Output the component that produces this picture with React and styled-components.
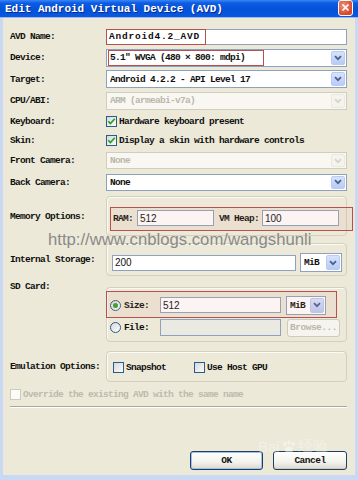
import React from "react";
import styled, { createGlobalStyle } from "styled-components";

const MONO = `"Liberation Mono", "DejaVu Sans Mono", monospace`;
const SANS = `"Liberation Sans", Arial, sans-serif`;

const Global = createGlobalStyle`
  html, body { margin: 0; padding: 0; background: #c8d8f4; }
  * { box-sizing: border-box; }
`;

const Window = styled.div`
  position: relative;
  width: 358px;
  height: 480px;
  overflow: hidden;
  display: flex;
  flex-direction: column;
  background: #c9d9f3;
  font-family: ${MONO};
  color: #111;
`;

const TitleBar = styled.div`
  height: 18px;
  flex: none;
  display: flex;
  align-items: center;
  padding: 0 5px;
  background: linear-gradient(#3a86f4 0%, #0b5ce4 18%, #0552d9 55%, #0858e0 100%);
  border-bottom: 1px solid #9cb8e8;
`;

const Title = styled.span`
  color: #fff;
  font-weight: bold;
  font-size: 11px;
  text-shadow: 1px 1px 0 #0a2a8a;
`;

const CloseBtn = styled.div`
  margin-left: auto;
  margin-top: -2px;
  width: 15px;
  height: 16px;
  border: 1px solid #fff;
  border-radius: 3px;
  background: radial-gradient(circle at 35% 35%, #f39478, #d9482a 70%);
  display: flex;
  align-items: center;
  justify-content: center;
`;

const Frame = styled.div`
  flex: 1;
  display: flex;
  padding: 0 4px 5px 3px;
`;

const Client = styled.div`
  flex: 1;
  display: flex;
  flex-direction: column;
  background: #ece9d8;
  padding: 8px 8px 5px 0;
`;

const Row = styled.div`
  flex: none;
  display: flex;
  align-items: ${(p) => (p.$top ? "flex-start" : "center")};
  height: ${(p) => p.$h}px;
  margin-top: ${(p) => p.$mt || 0}px;
`;

const Label = styled.div`
  width: ${(p) => (p.$auto ? "auto" : "103px")};
  flex: none;
  padding-left: 7px;
  font-size: 9.5px;
  font-weight: bold;
  letter-spacing: -0.7px;
  white-space: nowrap;
  color: ${(p) => (p.$disabled ? "#b9b7aa" : "#111")};
  ${(p) => (p.$pt ? `margin-top: ${p.$pt}px;` : "")}
`;

const Control = styled.div`
  width: 241px;
  flex: none;
  display: flex;
  align-items: center;
`;

const TextBox = styled.div`
  position: relative;
  height: ${(p) => p.$h || 16}px;
  width: ${(p) => (p.$w ? `${p.$w}px` : "100%")};
  flex: none;
  border: 1px solid #8ea2bd;
  background: ${(p) => (p.$disabled ? "#ebeae2" : "#fff")};
  display: flex;
  align-items: center;
  padding-left: 2px;
  font-family: ${(p) => (p.$sans ? SANS : MONO)};
  font-size: ${(p) => (p.$sans ? "10px" : "9.5px")};
  font-weight: ${(p) => (p.$sans ? "normal" : "bold")};
  letter-spacing: ${(p) => (p.$spread ? "0.8px" : p.$sans ? "0" : "-0.7px")};
  white-space: nowrap;
`;

const SelectBox = styled.div`
  position: relative;
  height: ${(p) => p.$h || 18}px;
  width: ${(p) => (p.$w ? `${p.$w}px` : "100%")};
  flex: none;
  border: 1px solid ${(p) => (p.$disabled ? "#cfcdc0" : "#8ea2bd")};
  background: ${(p) => (p.$disabled ? "#f8f7f2" : "#fff")};
  display: flex;
  align-items: center;
  padding-left: 3px;
  font-size: 9.5px;
  font-weight: bold;
  letter-spacing: -0.7px;
  white-space: nowrap;
  color: ${(p) => (p.$disabled ? "#bab8ac" : "#111")};
`;

const SelectText = styled.span`
  flex: 1;
  overflow: hidden;
`;

const DropBtn = styled.span`
  width: 14px;
  height: calc(100% - 2px);
  margin-right: 1px;
  border-radius: 2px;
  flex: none;
  border: 1px solid ${(p) => (p.$disabled ? "#ebe9df" : "#b9cbf3")};
  background: ${(p) =>
    p.$disabled ? "#f4f3ec" : "linear-gradient(#d7e3fd, #b8cbf7)"};
  display: flex;
  align-items: center;
  justify-content: center;
`;

const Mark = styled.span`
  position: absolute;
  left: ${(p) => p.$l}px;
  top: ${(p) => p.$t}px;
  width: ${(p) => p.$w}px;
  height: ${(p) => p.$h}px;
  border: 1.5px solid #b5514f;
  background: ${(p) => (p.$fill ? "rgba(225, 150, 130, 0.1)" : "transparent")};
  pointer-events: none;
`;

const Group = styled.div`
  position: relative;
  width: 241px;
  height: ${(p) => p.$h}px;
  flex: none;
  border: 1px solid #d3d0bf;
  border-radius: 4px;
  box-shadow: inset 1px 1px 0 #fbfaf5;
  display: flex;
  flex-direction: column;
  gap: ${(p) => p.$gap || 0}px;
  padding: ${(p) => p.$pad};
`;

const GroupLine = styled.div`
  display: flex;
  align-items: center;
  height: ${(p) => p.$h}px;
  flex: none;
`;

const SubLabel = styled.span`
  width: ${(p) => p.$w}px;
  margin-left: ${(p) => p.$ml || 0}px;
  flex: none;
  font-size: 9.5px;
  font-weight: bold;
  letter-spacing: -0.7px;
  white-space: nowrap;
`;

const CheckItem = styled.label`
  display: flex;
  align-items: center;
  gap: 2px;
  width: ${(p) => (p.$w ? `${p.$w}px` : "auto")};
  flex: none;
  font-size: 9.5px;
  font-weight: bold;
  letter-spacing: -0.7px;
  white-space: nowrap;
  color: ${(p) => (p.$disabled ? "#bcbaae" : "#111")};
`;

const Box = styled.span`
  width: 11px;
  height: 11px;
  flex: none;
  border: 1px solid ${(p) => (p.$disabled ? "#cdcbbf" : "#2d5b85")};
  background: ${(p) =>
    p.$disabled ? "#fbfbf8" : "linear-gradient(135deg, #d4d8e0, #fbfbf9)"};
  display: inline-flex;
  align-items: center;
  justify-content: center;
`;

const Radio = styled.span`
  width: 11px;
  height: 11px;
  flex: none;
  border-radius: 50%;
  border: 1px solid #2d5b85;
  background: linear-gradient(135deg, #d6d8dc, #fff);
  display: inline-flex;
  align-items: center;
  justify-content: center;
  margin-right: 3px;
  &::after {
    content: "";
    width: 5px;
    height: 5px;
    border-radius: 50%;
    background: ${(p) => (p.$on ? "#2aa52a" : "transparent")};
  }
`;

const Separator = styled.div`
  flex: none;
  margin: 6px 0 0 7px;
  height: 2px;
  border-top: 1px solid #aca899;
  border-bottom: 1px solid #fff;
`;

const ButtonBar = styled.div`
  margin-top: auto;
  display: flex;
  justify-content: flex-end;
  gap: 10px;
`;

const Btn = styled.div`
  width: ${(p) => p.$w}px;
  height: ${(p) => p.$h || 19}px;
  margin-left: ${(p) => p.$ml || 0}px;
  flex: none;
  border: 1px solid ${(p) => (p.$disabled ? "#cdcbbe" : "#1e3e62")};
  border-radius: 3px;
  background: ${(p) =>
    p.$disabled ? "#f5f4ee" : "linear-gradient(#ffffff, #f3f2ec 60%, #dcd8cc)"};
  box-shadow: ${(p) =>
    p.$focus ? "inset 0 0 0 1px #9ec0f0" : p.$disabled ? "none" : "inset 0 -1px 0 #d0cabd"};
  display: flex;
  align-items: center;
  justify-content: center;
  font-size: 9.5px;
  font-weight: bold;
  letter-spacing: -0.5px;
  color: ${(p) => (p.$disabled ? "#bab8ac" : "#111")};
`;

const Watermark = styled.div`
  position: absolute;
  left: 48px;
  top: 230px;
  font-family: ${SANS};
  font-size: 16.7px;
  color: #8a8a8a;
  white-space: nowrap;
  pointer-events: none;
`;

const BaiduMark = styled.div`
  position: absolute;
  left: 258px;
  top: 437px;
  display: flex;
  align-items: center;
  gap: 1px;
  font-family: ${SANS};
  font-size: 15px;
  color: rgba(255, 255, 255, 0.38);
  pointer-events: none;
`;

const Chevron = ({ disabled }) => (
  <svg width="8" height="6" viewBox="0 0 8 6">
    <path
      d="M1 1.2 L4 4.2 L7 1.2"
      fill="none"
      stroke={disabled ? "#d6d4ca" : "#4d6185"}
      strokeWidth="1.8"
    />
  </svg>
);

const Select = ({ children, disabled, w, h, mark }) => (
  <SelectBox $disabled={disabled} $w={w} $h={h}>
    <SelectText>{children}</SelectText>
    <DropBtn $disabled={disabled}>
      <Chevron disabled={disabled} />
    </DropBtn>
    {mark}
  </SelectBox>
);

const CheckMark = () => (
  <svg width="9" height="9" viewBox="0 0 9 9">
    <polyline points="1.3,4.3 3.4,6.6 7.8,1.8" fill="none" stroke="#22a322" strokeWidth="1.7" />
  </svg>
);

export default function App() {
  return (
    <>
      <Global />
      <Window>
        <TitleBar>
          <Title>Edit Android Virtual Device (AVD)</Title>
          <CloseBtn>
            <svg width="9" height="9" viewBox="0 0 9 9">
              <path d="M1.5 1.5 L7.5 7.5 M7.5 1.5 L1.5 7.5" stroke="#fff" strokeWidth="1.7" />
            </svg>
          </CloseBtn>
        </TitleBar>
        <Frame>
          <Client>
            <Row $h={21}>
              <Label>AVD Name:</Label>
              <Control>
                <TextBox $spread>
                  Android4.2_AVD
                  <Mark $l={-1} $t={-1} $w={100} $h={16} />
                </TextBox>
              </Control>
            </Row>
            <Row $h={21}>
              <Label>Device:</Label>
              <Control>
                <Select mark={<Mark $l={1} $t={0} $w={156} $h={16} />}>
                  5.1" WVGA (480 × 800: mdpi)
                </Select>
              </Control>
            </Row>
            <Row $h={22}>
              <Label>Target:</Label>
              <Control>
                <Select>Android 4.2.2 - API Level 17</Select>
              </Control>
            </Row>
            <Row $h={21}>
              <Label>CPU/ABI:</Label>
              <Control>
                <Select disabled>ARM (armeabi-v7a)</Select>
              </Control>
            </Row>
            <Row $h={20}>
              <Label>Keyboard:</Label>
              <Control>
                <CheckItem>
                  <Box>
                    <CheckMark />
                  </Box>
                  Hardware keyboard present
                </CheckItem>
              </Control>
            </Row>
            <Row $h={19}>
              <Label>Skin:</Label>
              <Control>
                <CheckItem>
                  <Box>
                    <CheckMark />
                  </Box>
                  Display a skin with hardware controls
                </CheckItem>
              </Control>
            </Row>
            <Row $h={21}>
              <Label>Front Camera:</Label>
              <Control>
                <Select disabled h={17}>None</Select>
              </Control>
            </Row>
            <Row $h={22}>
              <Label>Back Camera:</Label>
              <Control>
                <Select h={17}>None</Select>
              </Control>
            </Row>

            <Row $h={40} $mt={3}>
              <Label>Memory Options:</Label>
              <Group $h={40} $pad="13px 0 0 6px">
                <GroupLine $h={16}>
                  <SubLabel $w={24}>RAM:</SubLabel>
                  <TextBox $w={77} $sans>512</TextBox>
                  <SubLabel $w={43} $ml={5}>VM Heap:</SubLabel>
                  <TextBox $w={77} $sans>100</TextBox>
                </GroupLine>
                <Mark $l={3} $t={10} $w={243} $h={24} $fill />
              </Group>
            </Row>

            <Row $h={33} $mt={7}>
              <Label>Internal Storage:</Label>
              <Group $h={33} $pad="9px 0 0 5px">
                <GroupLine $h={19}>
                  <TextBox $w={184} $sans>200</TextBox>
                  <SubLabel $w={4} />
                  <Select w={42} h={19}>MiB</Select>
                </GroupLine>
              </Group>
            </Row>

            <Row $h={55} $mt={11} $top>
              <Label $pt={-6}>SD Card:</Label>
              <Group $h={55} $pad="8px 0 0 3px" $gap={5}>
                <GroupLine $h={18}>
                  <Radio $on />
                  <SubLabel $w={36}>Size:</SubLabel>
                  <TextBox $w={121} $sans>512</TextBox>
                  <SubLabel $w={5} />
                  <Select w={40} h={19}>MiB</Select>
                </GroupLine>
                <GroupLine $h={17}>
                  <Radio />
                  <SubLabel $w={36}>File:</SubLabel>
                  <TextBox $w={121} $h={17} $disabled />
                  <Btn $w={53} $h={18} $ml={6} $disabled>Browse...</Btn>
                </GroupLine>
                <Mark $l={-1} $t={3} $w={231} $h={27} $fill />
              </Group>
            </Row>

            <Row $h={31} $mt={9}>
              <Label>Emulation Options:</Label>
              <Group $h={31} $pad="10px 0 0 6px">
                <GroupLine $h={11}>
                  <CheckItem $w={81}>
                    <Box />
                    Snapshot
                  </CheckItem>
                  <CheckItem>
                    <Box />
                    Use Host GPU
                  </CheckItem>
                </GroupLine>
              </Group>
            </Row>

            <Row $h={12} $mt={6}>
              <Label $auto>
                <CheckItem $disabled>
                  <Box $disabled />
                  Override the existing AVD with the same name
                </CheckItem>
              </Label>
            </Row>

            <Separator />

            <ButtonBar>
              <Btn $w={73} $focus>OK</Btn>
              <Btn $w={74}>Cancel</Btn>
            </ButtonBar>
          </Client>
        </Frame>
        <Watermark>http://www.cnblogs.com/wangshunli</Watermark>
        <BaiduMark>
          Bai
          <svg width="16" height="16" viewBox="0 0 16 16">
            <g fill="rgba(255,255,255,0.45)">
              <ellipse cx="4" cy="5" rx="1.6" ry="2.2" />
              <ellipse cx="8" cy="3.5" rx="1.6" ry="2.2" />
              <ellipse cx="12" cy="5" rx="1.6" ry="2.2" />
              <ellipse cx="8" cy="11" rx="4" ry="3.5" />
            </g>
          </svg>
          经验
        </BaiduMark>
      </Window>
    </>
  );
}
